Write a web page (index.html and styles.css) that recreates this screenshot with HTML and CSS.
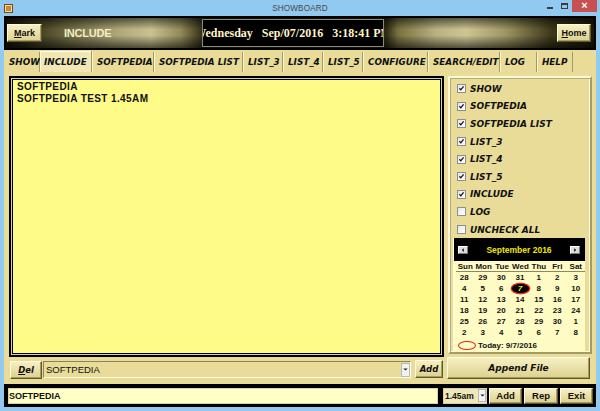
FILE: index.html
```html
<!DOCTYPE html>
<html>
<head>
<meta charset="utf-8">
<title>SHOWBOARD</title>
<link rel="stylesheet" href="styles.css">
</head>
<body>
<div class="titlebar">
  <div class="tb-left"><span class="appicon"></span></div>
  <div class="title">SHOWBOARD</div>
  <div class="controls">
    <span class="ctl-min"></span>
    <span class="ctl-max"></span>
    <span class="ctl-close">&#215;</span>
  </div>
</div>
<div class="client">
  <header class="topbar">
    <button class="btn mark"><u>M</u>ark</button>
    <span class="mode">INCLUDE</span>
    <div class="clock"><span>Wednesday   Sep/07/2016   3:18:41 PM</span></div>
    <button class="btn home"><u>H</u>ome</button>
  </header>
  <nav class="tabs">
    <span class="tab">SHOW</span>
    <span class="tab active">INCLUDE</span>
    <span class="tab">SOFTPEDIA</span>
    <span class="tab">SOFTPEDIA LIST</span>
    <span class="tab">LIST_3</span>
    <span class="tab">LIST_4</span>
    <span class="tab">LIST_5</span>
    <span class="tab">CONFIGURE</span>
    <span class="tab">SEARCH/EDIT</span>
    <span class="tab">LOG</span>
    <span class="tab">HELP</span>
  </nav>
  <main class="main">
    <div class="editor">SOFTPEDIA<br>SOFTPEDIA TEST 1.45AM</div>
    <aside class="side">
      <ul class="checks">
        <li><span class="cb"><svg viewBox="0 0 9 9"><path d="M1.8 4.2 L3.6 6.2 L7.2 1.8" /></svg></span>SHOW</li>
        <li><span class="cb"><svg viewBox="0 0 9 9"><path d="M1.8 4.2 L3.6 6.2 L7.2 1.8" /></svg></span>SOFTPEDIA</li>
        <li><span class="cb"><svg viewBox="0 0 9 9"><path d="M1.8 4.2 L3.6 6.2 L7.2 1.8" /></svg></span>SOFTPEDIA LIST</li>
        <li><span class="cb"><svg viewBox="0 0 9 9"><path d="M1.8 4.2 L3.6 6.2 L7.2 1.8" /></svg></span>LIST_3</li>
        <li><span class="cb"><svg viewBox="0 0 9 9"><path d="M1.8 4.2 L3.6 6.2 L7.2 1.8" /></svg></span>LIST_4</li>
        <li><span class="cb"><svg viewBox="0 0 9 9"><path d="M1.8 4.2 L3.6 6.2 L7.2 1.8" /></svg></span>LIST_5</li>
        <li><span class="cb"><svg viewBox="0 0 9 9"><path d="M1.8 4.2 L3.6 6.2 L7.2 1.8" /></svg></span>INCLUDE</li>
        <li><span class="cb"></span>LOG</li>
        <li><span class="cb"></span>UNCHECK ALL</li>
      </ul>
      <div class="calendar">
        <div class="cal-head">
          <span class="cal-btn"><svg viewBox="0 0 10 8"><path d="M6 1.5 L3.5 4 L6 6.5 Z"/></svg></span>
          <span class="cal-title">September 2016</span>
          <span class="cal-btn"><svg viewBox="0 0 10 8"><path d="M4 1.5 L6.5 4 L4 6.5 Z"/></svg></span>
        </div>
        <div class="cal-days"><span>Sun</span><span>Mon</span><span>Tue</span><span>Wed</span><span>Thu</span><span>Fri</span><span>Sat</span></div>
        <div class="cal-grid">
          <span>28</span><span>29</span><span>30</span><span>31</span><span>1</span><span>2</span><span>3</span>
          <span>4</span><span>5</span><span>6</span><span class="sel"><i>7</i></span><span>8</span><span>9</span><span>10</span>
          <span>11</span><span>12</span><span>13</span><span>14</span><span>15</span><span>16</span><span>17</span>
          <span>18</span><span>19</span><span>20</span><span>21</span><span>22</span><span>23</span><span>24</span>
          <span>25</span><span>26</span><span>27</span><span>28</span><span>29</span><span>30</span><span>1</span>
          <span>2</span><span>3</span><span>4</span><span>5</span><span>6</span><span>7</span><span>8</span>
        </div>
        <div class="cal-today"><span class="today-mark"></span>Today: 9/7/2016</div>
      </div>
    </aside>
  </main>
  <div class="actions">
    <button class="btn ibtn del"><u>D</u>el</button>
    <div class="combo"><span class="combo-text">SOFTPEDIA</span><span class="drop"><svg viewBox="0 0 7 4"><path d="M0.5 0.5 L6.5 0.5 L3.5 3.5 Z"/></svg></span></div>
    <button class="btn ibtn add">Add</button>
    <button class="btn ibtn append">Append File</button>
  </div>
  <footer class="status">
    <div class="status-input">SOFTPEDIA</div>
    <div class="time-combo"><span>1.45am</span><span class="drop"><svg viewBox="0 0 7 4"><path d="M0.5 0.5 L6.5 0.5 L3.5 3.5 Z"/></svg></span></div>
    <button class="btn sbtn add2">Add</button>
    <button class="btn sbtn rep">Rep</button>
    <button class="btn sbtn exit">Exit</button>
  </footer>
</div>
</body>
</html>
```

FILE: styles.css
```css
* { box-sizing: border-box; }
html, body { margin: 0; padding: 0; }
body {
  width: 600px;
  height: 411px;
  overflow: hidden;
  background: #92c9f0;
  font-family: "Liberation Sans", Arial, sans-serif;
}

/* title bar */
.titlebar {
  height: 16px;
  display: grid;
  grid-template-columns: 1fr auto 1fr;
  align-items: center;
}
.tb-left { display: flex; align-items: center; }
.appicon {
  width: 9px;
  height: 9px;
  margin-left: 4px;
  background: #c98b3a;
  border: 1px solid #7a4a14;
  box-shadow: inset 0 0 0 1px #f3d7a0;
}
.title {
  font-size: 8.2px;
  color: #4a4a4a;
  letter-spacing: 0.1px;
}
.controls {
  justify-self: end;
  display: flex;
  align-items: flex-start;
  height: 16px;
}
.ctl-min {
  width: 6px;
  height: 2px;
  background: #3c3c3c;
  margin-top: 7px;
  margin-right: 8px;
}
.ctl-max {
  width: 7px;
  height: 6px;
  border: 1px solid #3c3c3c;
  border-top-width: 2px;
  margin-top: 3px;
  margin-right: 4px;
}
.ctl-close {
  width: 25px;
  height: 12px;
  background: #c75050;
  color: #fff;
  font-size: 11px;
  font-weight: bold;
  line-height: 11px;
  text-align: center;
  margin-right: 3px;
}

/* client area */
.client {
  margin: 0 4px;
  height: 391px;
  background: #e8dc98;
  display: flex;
  flex-direction: column;
}

.btn {
  font-family: "Liberation Sans", Arial, sans-serif;
  font-weight: bold;
  font-size: 9px;
  color: #111;
  padding: 0;
  margin: 0;
  background: linear-gradient(#f6f0c2, #dcd08e);
  border: 1px solid;
  border-color: #fffbe2 #5e5830 #5e5830 #fffbe2;
  box-shadow: inset -1px -1px 0 #a69c5e;
  display: flex;
  align-items: center;
  justify-content: center;
}
.btn u { text-decoration: underline; text-underline-offset: 1px; }

/* top bar */
.topbar {
  height: 34px;
  flex: none;
  border: 2px solid #000;
  display: flex;
  align-items: center;
  background:
    linear-gradient(to bottom, rgba(0,0,0,.55) 0%, rgba(0,0,0,0) 38%, rgba(0,0,0,0) 58%, rgba(0,0,0,.6) 100%),
    linear-gradient(to right, #15130a 0, #3e3a1e 30px, #6d6840 60px, #aca577 110px, #c9c190 145px, #8f8858 175px, #2c2812 198px, #2c2812 380px, #77703f 392px, #b9b181 430px, #cdc592 460px, #9c9463 500px, #3d3819 545px, #1a1709 588px);
}
.mark {
  width: 35px;
  height: 18px;
  margin-left: 1px;
}
.mode {
  width: 160px;
  padding-left: 22px;
  color: #f2eec2;
  font-weight: bold;
  font-size: 11px;
  letter-spacing: -0.2px;
}
.clock {
  width: 182px;
  height: 28px;
  background: #000;
  border: 1px solid #8a8a7a;
  display: flex;
  justify-content: center;
  align-items: center;
  overflow: hidden;
}
.clock span {
  white-space: pre;
  flex: none;
  font-family: "Liberation Serif", "Times New Roman", serif;
  font-weight: bold;
  font-size: 12px;
  color: #fff5c8;
}
.home {
  width: 34px;
  height: 18px;
  margin-left: auto;
  margin-right: 3px;
}

/* tabs */
.tabs {
  height: 22px;
  flex: none;
  display: grid;
  grid-template-columns: 36px 52px 62px 89px 40px 40px 40px 65px 72px 37px 36px;
  align-items: stretch;
}
.tab {
  display: flex;
  align-items: center;
  padding-left: 5px;
  font-family: "DejaVu Sans", Verdana, sans-serif;
  font-weight: bold;
  font-style: oblique;
  font-size: 8.8px;
  color: #111;
  white-space: nowrap;
  border-right: 1px solid #a39a64;
  box-shadow: inset 1px 0 0 #fbf5d2;
  margin-top: 2px;
}
.tab:first-child { box-shadow: none; }
.tab.active {
  padding-left: 4px;
  margin-top: 1px;
  background: #efe8b6;
  box-shadow: inset 1px 1px 0 #fffce8;
}

/* main */
.main {
  height: 281px;
  flex: none;
  margin-top: 4px;
  padding-left: 5px;
  display: flex;
  align-items: flex-start;
  gap: 4px;
}
.editor {
  width: 435px;
  height: 281px;
  background: #fefb88;
  border: 2px solid #000;
  box-shadow: inset 0 0 0 1px #d4d0a8, inset 0 0 0 2px #000;
  padding: 3px 6px;
  font-weight: bold;
  font-size: 10px;
  line-height: 12px;
  letter-spacing: 0.4px;
  color: #111;
}
.side {
  width: 144px;
  height: 278px;
  border: 2px solid;
  border-color: #fdf8d8 #a49c62 #a49c62 #fdf8d8;
  box-shadow: inset 1px 1px 0 #b5ad72, inset -1px -1px 0 #fffbe4;
  padding: 2px 0 0 7px;
  display: flex;
  flex-direction: column;
}
.checks {
  list-style: none;
  margin: 0;
  padding: 0;
}
.checks li {
  height: 17.6px;
  display: flex;
  align-items: center;
  gap: 4px;
  font-family: "DejaVu Sans", Verdana, sans-serif;
  font-weight: bold;
  font-style: oblique;
  font-size: 9px;
  color: #111;
  white-space: nowrap;
}
.cb {
  width: 9px;
  height: 9px;
  flex: none;
  background: linear-gradient(135deg, #e6e6e6, #ffffff);
  border: 1px solid #8e8e8e;
  display: block;
}
.cb svg {
  display: block;
  width: 7px;
  height: 7px;
}
.cb path {
  fill: none;
  stroke: #111;
  stroke-width: 1.6;
}

/* calendar */
.calendar {
  flex: 1;
  margin-left: -4px;
  margin-right: 5px;
  background: #fffbc4;
  border-left: 1px solid #fffde8;
  display: flex;
  flex-direction: column;
  font-weight: bold;
  font-size: 8px;
  color: #111;
}
.cal-head {
  height: 23px;
  background: #000;
  display: flex;
  align-items: center;
  padding: 0 5px 0 4px;
}
.cal-btn {
  width: 10px;
  height: 8px;
  background: #dcdcdc;
  border: 1px solid;
  border-color: #fff #7a7a7a #7a7a7a #fff;
  display: block;
}
.cal-btn svg { display: block; width: 8px; height: 6px; }
.cal-btn path { fill: #000; }
.cal-title {
  flex: 1;
  text-align: center;
  color: #f2e400;
  font-size: 8.5px;
}
.cal-days {
  height: 11px;
  margin: 0 0 0 2px;
  display: grid;
  grid-template-columns: repeat(7, 1fr);
  align-items: center;
  text-align: center;
  border-bottom: 1px solid #8c8866;
}
.cal-grid {
  margin: 0 0 0 1px;
  display: grid;
  grid-template-columns: repeat(7, 1fr);
  grid-auto-rows: 11px;
  align-items: center;
  text-align: center;
}
.cal-grid span {
  line-height: 11px;
  display: flex;
  justify-content: center;
  align-items: center;
}
.cal-grid .sel i {
  display: block;
  width: 19px;
  height: 11px;
  border-radius: 50%;
  background: #000;
  border: 1px solid #e02020;
  box-shadow: 0 0 0 0.5px #ff6060;
  color: #f2e400;
  font-style: italic;
  line-height: 9px;
  font-size: 8px;
}
.cal-today {
  flex: 1;
  display: flex;
  align-items: center;
  padding-left: 4px;
  gap: 2px;
}
.today-mark {
  width: 18px;
  height: 9px;
  border: 1px solid #e52222;
  border-radius: 50%;
}

/* actions row */
.actions {
  height: 22px;
  flex: none;
  display: flex;
  align-items: flex-end;
  padding-left: 6px;
}
.ibtn {
  font-family: "DejaVu Sans", Verdana, sans-serif;
  font-style: oblique;
  font-size: 8.5px;
}
.del {
  width: 32px;
  height: 18px;
}
.combo {
  width: 368px;
  height: 17px;
  margin-left: 1px;
  margin-bottom: 1px;
  border: 1px solid;
  border-color: #8a8460 #fffbe6 #fffbe6 #8a8460;
  display: flex;
  align-items: center;
  padding-left: 2px;
  font-size: 9.5px;
  color: #111;
}
.combo-text { flex: 1; }
.drop {
  width: 9px;
  height: 14px;
  background: #f2f2f2;
  border: 1px solid #b8b8b8;
  display: flex;
  align-items: center;
  justify-content: center;
}
.drop svg { width: 5px; height: 3px; display: block; }
.drop path { fill: #222; }
.add {
  width: 28px;
  height: 18px;
  margin-left: 4px;
  margin-bottom: 1px;
}
.append {
  width: 143px;
  height: 22px;
  margin-left: 4px;
  font-size: 9px;
}

/* status bar */
.status {
  height: 23px;
  flex: none;
  margin-top: 5px;
  background: #000;
  display: flex;
  align-items: center;
  padding: 0 3px 0 4px;
}
.status-input {
  width: 430px;
  height: 16px;
  background: #ffffc6;
  border: 1px solid #d8d4a8;
  font-weight: bold;
  font-size: 9px;
  line-height: 14px;
  color: #111;
}
.time-combo {
  width: 44px;
  height: 16px;
  margin-left: 5px;
  background: #efe8b8;
  border: 1px solid #d8d0a0;
  display: flex;
  align-items: center;
  padding-left: 1px;
  font-weight: bold;
  font-size: 8.5px;
  color: #111;
}
.time-combo span:first-child { flex: 1; }
.time-combo .drop { height: 13px; width: 8px; }
.sbtn {
  height: 16px;
  font-size: 9.5px;
}
.add2 { width: 33px; margin-left: 2px; }
.rep { width: 34px; margin-left: 2px; }
.exit { width: 33px; margin-left: 2px; }
```
